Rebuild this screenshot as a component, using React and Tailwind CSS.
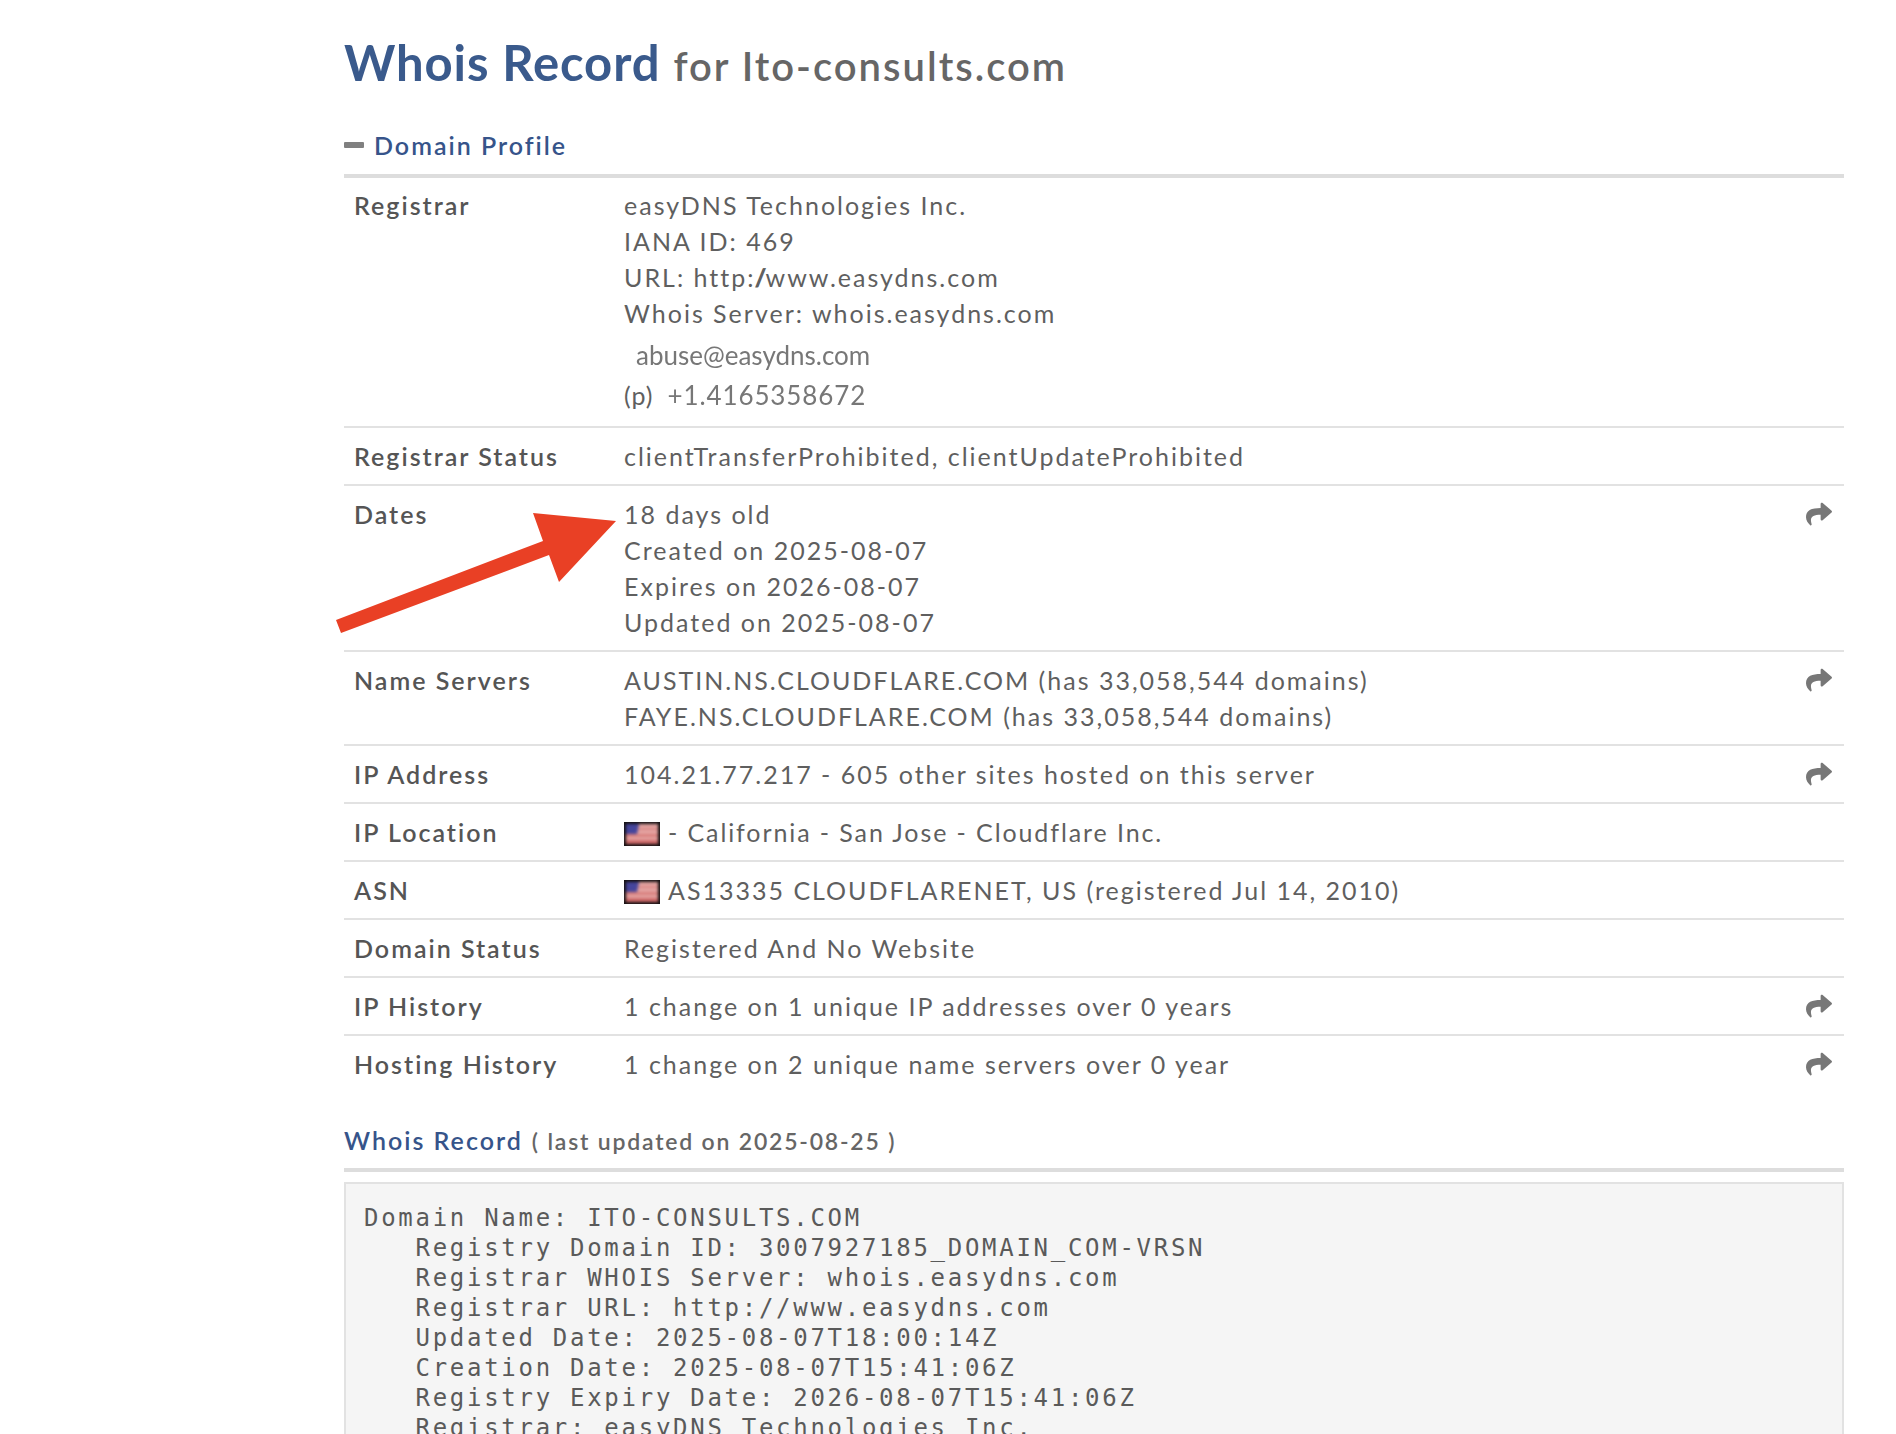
import React from "react";
import { FaShare } from "react-icons/fa";

function Flag() {
  return (
    <svg width="36" height="24" viewBox="0 0 36 24" className="mt-[3px] shrink-0">
      <rect width="36" height="24" fill="#141012" />
      <g style={{ filter: "blur(1.4px)" }}>
        <rect x="2" y="2" width="32" height="20" fill="#e4a4a2" />
        <rect x="2" y="6" width="32" height="2" fill="#d98583" />
        <rect x="2" y="12" width="32" height="3" fill="#d87e7c" />
        <rect x="2" y="18" width="32" height="4" fill="#d06a6a" />
        <polygon points="2,2 15,2 13,12 2,12" fill="#45459c" />
      </g>
    </svg>
  );
}

function Row({ label, share, children, last, first }) {
  return (
    <div className={`flex border-[#e2e2e2] ${first ? "pt-[9px] pb-[11px]" : "pt-[10px] pb-[10px]"} ${last ? "" : "border-b-2"}`}>
      <div className="w-[280px] shrink-0 pl-[10px] font-semibold text-[#555555]">{label}</div>
      <div className="min-w-0 flex-1">{children}</div>
      {share && (
        <div className="flex w-[38px] shrink-0 justify-start pt-[5px] text-[#777777]">
          <FaShare className="h-[26px] w-[26px]" />
        </div>
      )}
    </div>
  );
}

const whois = `Domain Name: ITO-CONSULTS.COM
   Registry Domain ID: 3007927185_DOMAIN_COM-VRSN
   Registrar WHOIS Server: whois.easydns.com
   Registrar URL: http://www.easydns.com
   Updated Date: 2025-08-07T18:00:14Z
   Creation Date: 2025-08-07T15:41:06Z
   Registry Expiry Date: 2026-08-07T15:41:06Z
   Registrar: easyDNS Technologies Inc.`;

export default function App() {
  return (
    <div className="relative h-[1434px] overflow-hidden bg-white font-['Lato',sans-serif] text-[25px] leading-[36px] tracking-[2px] text-[#5f5f5f]">
      <div className="ml-[344px] w-[1500px] pt-[32px]">
        <h1 className="flex items-baseline gap-[13px] leading-[60px]">
          <span className="text-[49px] font-bold tracking-[0.9px] text-[#3a5a8c]">Whois Record</span>
          <span className="text-[40px] font-semibold tracking-[2px] text-[#666666]">for Ito-consults.com</span>
        </h1>
        <div className="mt-[31px] flex items-center border-b-4 border-[#dddddd] pb-[11px] leading-[36px]">
          <span className="mr-[10px] h-[6px] w-[20px] rounded-[1px] bg-[#808080]"></span>
          <span className="font-semibold text-[#36548a]">Domain Profile</span>
        </div>
        <Row label="Registrar" first>
          <div>easyDNS Technologies Inc.</div>
          <div>IANA ID: 469</div>
          <div>URL: http:<span className="tracking-[-7px]">//</span><span className="ml-[7px]">www.easydns.com</span></div>
          <div>Whois Server: whois.easydns.com</div>
          <div className="mt-[6px] pl-[12px] text-[26px] tracking-[0px] text-[#777777] blur-[0.6px]">abuse@easydns.com</div>
          <div className="mt-[4px] mb-[2px] flex items-center">
            <span className="mr-[14px] tracking-[1px]">(p)</span>
            <span className="text-[26px] tracking-[0.9px] text-[#777777] blur-[0.6px]">+1.4165358672</span>
          </div>
        </Row>
        <Row label="Registrar Status">clientTransferProhibited, clientUpdateProhibited</Row>
        <Row label="Dates" share>
          <div>18 days old</div>
          <div>Created on 2025-08-07</div>
          <div>Expires on 2026-08-07</div>
          <div>Updated on 2025-08-07</div>
        </Row>
        <Row label="Name Servers" share>
          <div>AUSTIN.NS.CLOUDFLARE.COM (has 33,058,544 domains)</div>
          <div>FAYE.NS.CLOUDFLARE.COM (has 33,058,544 domains)</div>
        </Row>
        <Row label="IP Address" share>104.21.77.217 - 605 other sites hosted on this server</Row>
        <Row label="IP Location">
          <div className="flex items-center gap-[8px]"><Flag /><span className="tracking-[1.9px]">- California - San Jose - Cloudflare Inc.</span></div>
        </Row>
        <Row label="ASN">
          <div className="flex items-center gap-[8px]"><Flag />AS13335 CLOUDFLARENET, US (registered Jul 14, 2010)</div>
        </Row>
        <Row label="Domain Status">Registered And No Website</Row>
        <Row label="IP History" share>1 change on 1 unique IP addresses over 0 years</Row>
        <Row label="Hosting History" share last>1 change on 2 unique name servers over 0 year</Row>
        <div className="mt-[30px] flex items-baseline gap-[9px] border-b-4 border-[#dddddd] pb-[9px]">
          <span className="font-semibold text-[#36548a]">Whois Record</span>
          <span className="text-[23px] font-semibold tracking-[1.8px] text-[#666666]">( last updated on 2025-08-25 )</span>
        </div>
        <pre className="mt-[10px] h-[400px] border-2 border-[#e2e2e2] bg-[#f5f5f5] px-[18px] pt-[19px] font-['DejaVu_Sans_Mono',monospace] text-[24px] leading-[30px] tracking-[2.72px] text-[#5a5a5a]">{whois}</pre>
      </div>
      <svg className="absolute left-0 top-0" width="700" height="700" viewBox="0 0 700 700">
        <polygon points="336,620 341,633 549,555 559,582 616,521 533,513 543,541" fill="#e94025" />
      </svg>
    </div>
  );
}
